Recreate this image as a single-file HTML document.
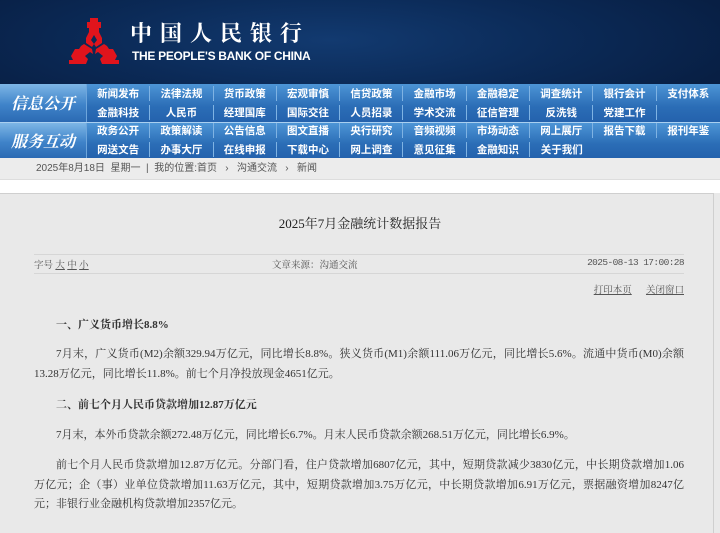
<!DOCTYPE html>
<html><head><meta charset="utf-8">
<style>
*{margin:0;padding:0;box-sizing:border-box}
body{width:720px;height:522px;overflow:hidden;background:#e9e9e9;font-family:"Liberation Sans","Noto Sans CJK SC",sans-serif}
#hdr{position:absolute;left:0;top:0;width:720px;height:84px;background:radial-gradient(ellipse 420px 90px at 330px 40px,#123a70 0%,#0b2a57 55%,#081f44 100%)}
#cn{position:absolute;left:130px;top:20px;color:#fff;font:bold 22px/26px "Noto Serif CJK SC",serif;letter-spacing:8px}
#en{position:absolute;left:132px;top:49px;color:#fff;font:bold 12px "Liberation Sans",sans-serif;letter-spacing:-0.3px}
.row{position:absolute;left:0;width:720px;background:linear-gradient(#4d95d6,#2b6db6 60%,#2462ad)}
.lab{position:absolute;left:0;width:87px;background:linear-gradient(#7db6e6,#3f83c9 55%,#2b6ab3);color:#fff;font:italic bold 16px "Noto Serif CJK SC",serif;text-align:center;border-right:1px solid #6ea6dc}
.nav{position:absolute;height:19px;color:#fff;font:bold 10.5px "Noto Sans CJK SC",sans-serif;display:flex}
.nav span{width:63.3px;text-align:center;border-right:1px solid #7fb3e3;height:15px;margin-top:2px;line-height:15px}
#bc{position:absolute;left:0;top:158px;width:720px;height:22px;background:#ececec;color:#555;font-size:10px;line-height:22px;padding-left:36px;border-bottom:1px solid #ddd}
#wh{position:absolute;left:0;top:180px;width:720px;height:13px;background:#fff}
#box{position:absolute;left:0;top:193px;width:714px;height:340px;background:#e9e9e9;border-top:1px solid #cfcfcf;border-right:1px solid #cfcfcf}
.t{position:absolute;font-family:"Liberation Serif","Noto Serif CJK SC",serif;color:#222}
.p{position:absolute;left:34px;width:650px;font:11px/19.5px "Liberation Serif","Noto Serif CJK SC",serif;color:#333}
.j{text-align:justify;text-align-last:justify;white-space:nowrap}
</style></head><body>
<div id="hdr">
<svg style="position:absolute;left:66px;top:16px" width="56" height="50" viewBox="0 0 56 50">
<g fill="#e0141c">
<polygon points="24,2 32,2 32,6 35,6 35,12 33,12 33,16 36,22 36,27 30,31 28,28 31,24 28,19 25,24 28,28 26,31 20,27 20,22 23,16 23,12 21,12 21,6 24,6"/>
<polygon points="18,28 26,33 27,38 24,36 19,40 22,43 20,48 3,48 3,44 7,44 5,40 9,33 13,33 15,30"/>
<polygon points="38,28 30,33 29,38 32,36 37,40 34,43 36,48 53,48 53,44 49,44 51,40 47,33 43,33 41,30"/>
</g></svg>
<div id="cn">中国人民银行</div>
<div id="en">THE PEOPLE'S BANK OF CHINA</div>
</div>
<div class="row" style="top:84px;height:38px"></div>
<div class="row" style="top:123px;height:35px"></div>
<div style="position:absolute;top:122px;left:0;width:720px;height:1px;background:#a9cff0"></div>
<div class="lab" style="top:84px;height:38px;line-height:38px">信息公开</div>
<div class="lab" style="top:123px;height:35px;line-height:35px">服务互动</div>
<div class="nav" style="left:87px;top:84px"><span>新闻发布</span><span>法律法规</span><span>货币政策</span><span>宏观审慎</span><span>信贷政策</span><span>金融市场</span><span>金融稳定</span><span>调查统计</span><span>银行会计</span><span style="border:0">支付体系</span></div>
<div class="nav" style="left:87px;top:103px"><span>金融科技</span><span>人民币</span><span>经理国库</span><span>国际交往</span><span>人员招录</span><span>学术交流</span><span>征信管理</span><span>反洗钱</span><span>党建工作</span><span style="border:0"></span></div>
<div class="nav" style="left:87px;top:121px"><span>政务公开</span><span>政策解读</span><span>公告信息</span><span>图文直播</span><span>央行研究</span><span>音频视频</span><span>市场动态</span><span>网上展厅</span><span>报告下载</span><span style="border:0">报刊年鉴</span></div>
<div class="nav" style="left:87px;top:140px"><span>网送文告</span><span>办事大厅</span><span>在线申报</span><span>下载中心</span><span>网上调查</span><span>意见征集</span><span>金融知识</span><span style="border:0">关于我们</span></div>
<div id="bc">2025年8月18日&nbsp; 星期一 &nbsp;|&nbsp; 我的位置:首页 &nbsp;&nbsp;›&nbsp;&nbsp; 沟通交流 &nbsp;&nbsp;›&nbsp;&nbsp; 新闻</div>
<div id="wh"></div>
<div id="box"></div>
<div class="t" style="left:0;width:720px;top:213px;text-align:center;font-size:13px">2025年7月金融统计数据报告</div>
<div style="position:absolute;left:34px;top:254px;width:650px;height:1px;background:#d6d6d6"></div>
<div style="position:absolute;left:34px;top:273px;width:650px;height:1px;background:#d6d6d6"></div>
<div class="t" style="left:34px;top:257px;font-size:9.5px;color:#555">字号 <u>大</u> <u>中</u> <u>小</u></div>
<div class="t" style="left:272px;top:257px;font-size:9.5px;color:#555">文章来源：沟通交流</div>
<div class="t" style="left:484px;width:200px;text-align:right;top:257px;font-size:9.5px;color:#555;font-family:'Liberation Mono',monospace;letter-spacing:-0.6px">2025-08-13 17:00:28</div>
<div class="t" style="left:484px;width:200px;text-align:right;top:282px;font-size:9.5px;color:#555"><u>打印本页</u>&nbsp;&nbsp;&nbsp;&nbsp;&nbsp;&nbsp;<u>关闭窗口</u></div>
<div class="p" style="top:316px;font-weight:bold;padding-left:22px">一、广义货币增长8.8%</div>
<div class="p" style="top:345px"><div class="j" style="text-indent:22px">7月末，广义货币(M2)余额329.94万亿元，同比增长8.8%。狭义货币(M1)余额111.06万亿元，同比增长5.6%。流通中货币(M0)余额</div><div>13.28万亿元，同比增长11.8%。前七个月净投放现金4651亿元。</div></div>
<div class="p" style="top:396px;font-weight:bold;padding-left:22px">二、前七个月人民币贷款增加12.87万亿元</div>
<div class="p" style="top:426px;padding-left:22px">7月末，本外币贷款余额272.48万亿元，同比增长6.7%。月末人民币贷款余额268.51万亿元，同比增长6.9%。</div>
<div class="p" style="top:456px"><div class="j" style="text-indent:22px">前七个月人民币贷款增加12.87万亿元。分部门看，住户贷款增加6807亿元，其中，短期贷款减少3830亿元，中长期贷款增加1.06</div><div class="j">万亿元；企（事）业单位贷款增加11.63万亿元，其中，短期贷款增加3.75万亿元，中长期贷款增加6.91万亿元，票据融资增加8247亿</div><div>元；非银行业金融机构贷款增加2357亿元。</div></div>
</body></html>
